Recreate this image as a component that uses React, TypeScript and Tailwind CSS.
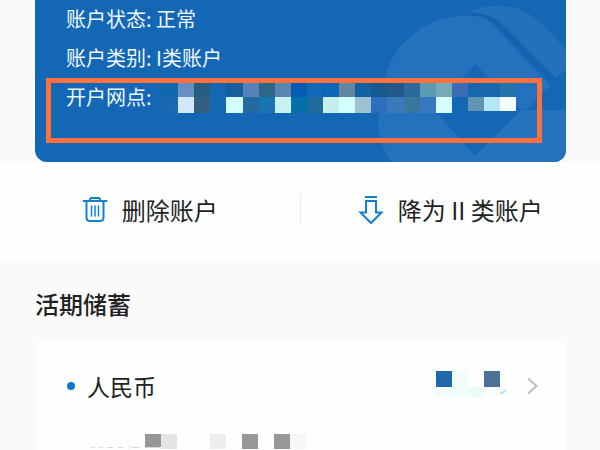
import type { ReactNode } from "react";

const CELL = 16;

// masked branch name, two rows of blocks
const branchTop = [
  "#0f69ae", "#6690c4", "#245f80", "#1567b3", "#155f9c", "#5682b8", "#2d6788", "#5986b0",
  "#045cb0", "#0f69b6", "#0a69b4", "#6285a0", "#1062a0", "#15598d", "#245888", "#2a6a9c",
  "#5c99b2", "#78a9b8", "#3b6cb4", "#1768aa", "#1768aa", "#2672ad",
];
const branchBottom = [
  "#1c68ae", "#d3e8ff", "#345f80", "#1467b5", "#d4ffff", "#24699f", "#1874b2", "#c8f2f0",
  "#0370ac", "#1f6a9c", "#c6eeea", "#d4ffff", "#9dc2d2", "#2c6fbe", "#3a7aba", "#3a779f",
  "#357ac0", "#d8ffff", "#1467b5", "#6094b0", "#b5e8f5", "#f5ffff",
];

function BranchMask() {
  return (
    <svg width="355" height="30" viewBox="0 0 355 30" shapeRendering="crispEdges" className="shrink-0" aria-hidden="true">
      {branchTop.map((fill, i) => (
        <rect key={i} x={i * 16.1} y="0" width="16.2" height="14" fill={fill} />
      ))}
      {branchBottom.map((fill, i) => (
        <rect key={i} x={i * 16.1} y="14" width="16.2" height={i > 18 ? 14 : 16} fill={fill} />
      ))}
    </svg>
  );
}

function BankMark() {
  return (
    <svg width="190" height="162" viewBox="376 0 190 162" className="absolute right-0 bottom-0" aria-hidden="true">
      <path
        fill="#2472bd"
        fillRule="evenodd"
        d="M391 162C384 150 378 138 378 124C378 112 385 104 385 80C388 62 397 48 408 39C423 24 442 16 462 16C478 15 487 18 494 26L551 86L534 102C530 108 526 110 521 110H566V162ZM475 64L434 110L475 156L521 110Z"
      />
      <path fill="#2271ba" d="M466 14C480 6 496 4 510 7C530 10 543 24 566 50V70L556 78L504 25C496 17 484 13 466 14Z" />
      <path fill="none" stroke="#1462ad" strokeWidth="3" d="M467 14C484 13 493 19 500 26L551 79" />
    </svg>
  );
}

function TrashIcon() {
  return (
    <svg width="26" height="28" viewBox="0 0 26 28" fill="none" stroke="#1581cb" strokeWidth="2" strokeLinecap="round" strokeLinejoin="round" aria-hidden="true">
      <path d="M1.500 5H24.500M8 5V3.500Q8 2 9.500 2H16.500Q18 2 18 3.500V5M4.500 5V21.500Q4.500 25 8 25H18Q21.500 25 21.500 21.500V5" />
      <path strokeWidth="1.500" d="M9.500 10V20M13 10V20M16.500 10V20" />
    </svg>
  );
}

function DowngradeIcon() {
  return (
    <svg width="26" height="30" viewBox="0 0 26 30" fill="none" stroke="#1581cb" strokeWidth="2" aria-hidden="true">
      <path d="M7 2H19M8 6H18V17.500H23.500L13 28L2.500 17.500H8Z" />
    </svg>
  );
}

function Action({ icon, children }: { icon: ReactNode; children: ReactNode }) {
  return (
    <button type="button" className="flex flex-1 items-center justify-center gap-3.5 text-2xl leading-8 text-[#222]">
      {icon}
      <span>{children}</span>
    </button>
  );
}

export default function App() {
  return (
    <main className="flex min-h-screen flex-col overflow-hidden bg-[#fafafa] font-['Noto_Sans_CJK_SC','Noto_Sans',sans-serif] text-[#222]">
      {/* Account card */}
      <section className="pr-[34px] pl-[35px]">
        <div className="relative overflow-hidden rounded-b-xl bg-[#1467b5] pr-6 pb-[19px] pl-[11px] text-xl text-[#eef8ff]">
          <BankMark />
          <div className="relative">
            <p className="pl-5 leading-[38px]">账户状态: 正常</p>
            <p className="pl-5 leading-10">账户类别: I类账户</p>
            <div className="border-5 border-[#ff7040] pb-[25px] pl-[15px]">
              <div className="flex items-start gap-2.5">
                <p className="shrink-0 leading-7">开户网点:</p>
                <BranchMask />
              </div>
            </div>
          </div>
        </div>
      </section>

      {/* Account actions */}
      <section className="flex items-center bg-[#fefefe] pt-8 pb-9">
        <Action icon={<TrashIcon />}>删除账户</Action>
        <span className="h-8 w-px bg-[#ececec]" />
        <Action icon={<DowngradeIcon />}>降为 II 类账户</Action>
      </section>

      {/* Demand deposits */}
      <section className="flex flex-1 flex-col pt-6 pr-[34px] pl-[35px]">
        <h2 className="text-2xl leading-9 font-medium">活期储蓄</h2>
        <div className="mt-5 flex-1 bg-[#fefefe]">
          <button type="button" className="flex w-full items-center pt-6 pr-6 pl-8 text-left">
            <span className="h-2 w-2 rounded-full bg-[#0c78d0]" />
            <span className="ml-3 flex-1 text-[23px] leading-10">人民币</span>
            <svg width="72" height="30" viewBox="0 0 72 30" className="mr-3.5" aria-hidden="true">
              <rect width={CELL} height={CELL} fill="#2069a8" />
              <rect x="16" width={CELL} height="26" fill="#f0fcff" />
              <rect y="16" width={CELL} height="10" fill="#f1fbfb" />
              <rect x="32" y="16" width={CELL} height="10" fill="#effbf9" />
              <rect x="48" width={CELL} height={CELL} fill="#4a7196" />
              <rect x="48" y="16" width={CELL} height="10" fill="#f8fdfd" />
              <path d="M64 22Q68 22 70 19" fill="none" stroke="#b4d9f0" strokeWidth="1.500" />
            </svg>
            <svg width="20" height="20" viewBox="0 0 20 20" fill="none" stroke="#bdbdbd" strokeWidth="2" aria-hidden="true">
              <path d="M6 2.500L14.500 10L6 17.500" />
            </svg>
          </button>
          <svg width="240" height="15" viewBox="0 0 240 15" shapeRendering="crispEdges" className="mt-7 ml-[52px]" aria-hidden="true">
            <path stroke="#d8d8d8" d="M4 13.500H8M12 13.500H16M20 13.500H26M31 13.500H36M42 12V15M45 13.500H53M58 13.500H73" />
            <rect x="58" width={CELL} height="13" fill="#969696" />
            <rect x="74" width={CELL} height="15" fill="#e4e4e4" />
            <rect x="123" width={CELL} height="15" fill="#eee" />
            <rect x="155" width={CELL} height="15" fill="#989898" />
            <rect x="187" width={CELL} height="15" fill="#989898" />
            <rect x="203" width={CELL} height="15" fill="#f7f7f7" />
          </svg>
        </div>
      </section>
    </main>
  );
}
